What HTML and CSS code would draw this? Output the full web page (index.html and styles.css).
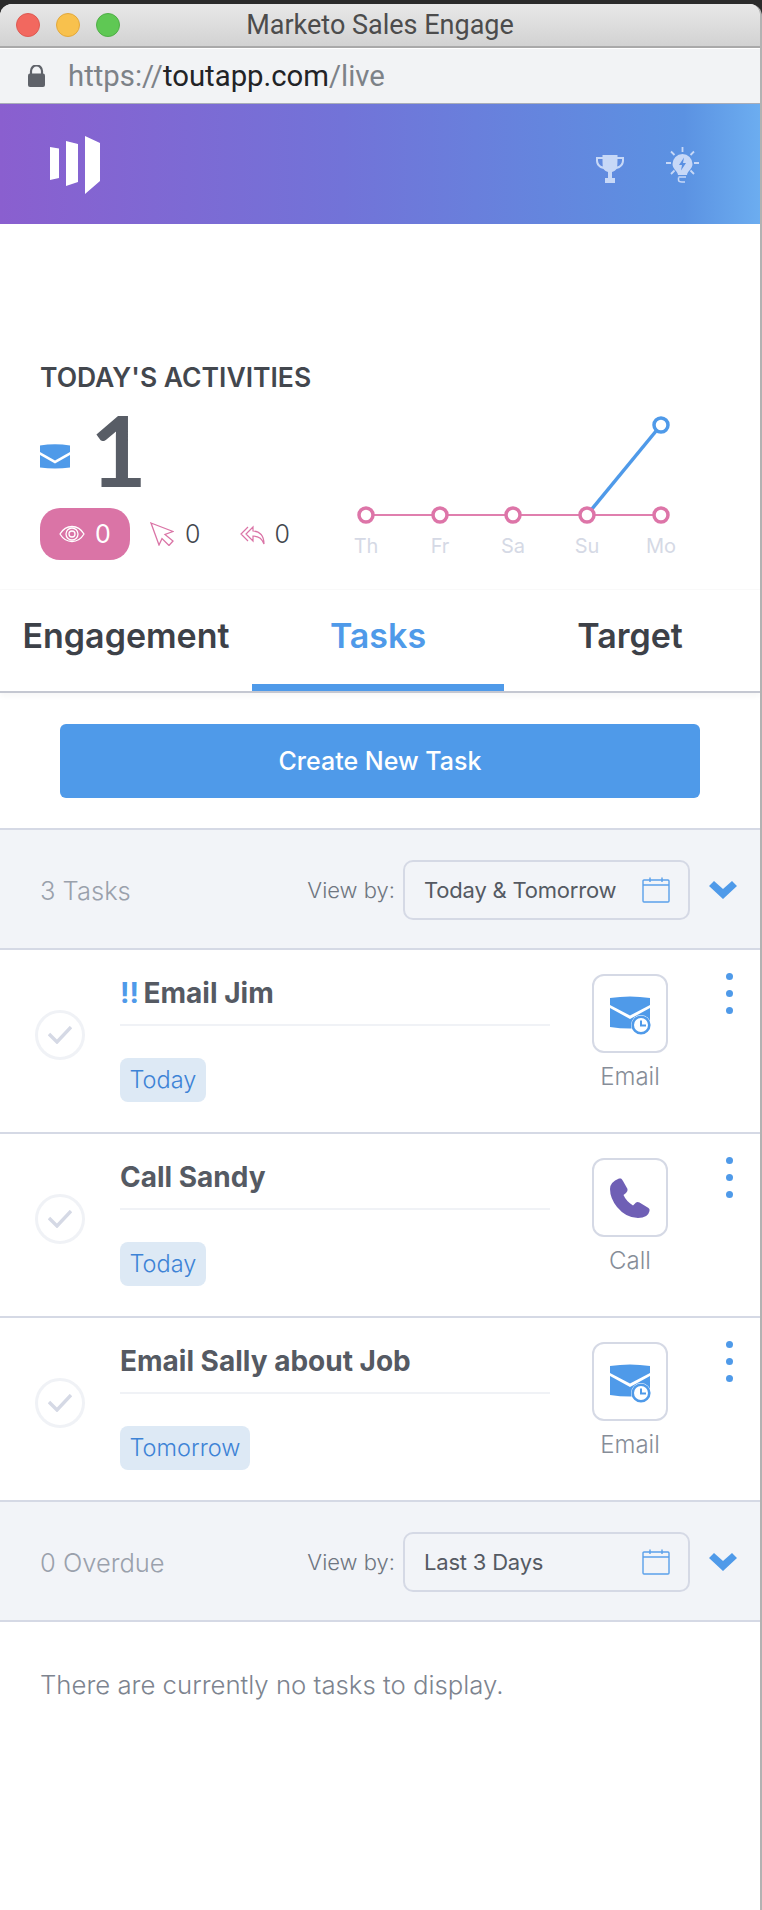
FILE: index.html
```html
<!DOCTYPE html>
<html lang="en">
<head>
    <meta charset="UTF-8">
    <meta name="viewport" content="width=device-width, initial-scale=1.0">
    <title>Marketo Sales Engage</title>
    <link rel="stylesheet" href="styles.css">
</head>
<body>
    <svg class="defs" width="0" height="0">
        <symbol id="mail-clock" viewBox="0 0 41 39">
            <path d="M0 2Q20 -1 40 2V9L20 19.500L0 9Z"/>
            <path d="M0 12L20 23L40 12V31Q20 34 0 31Z"/>
            <circle cx="31" cy="29" r="10" fill="#fff"/>
            <circle cx="31" cy="29" r="8.300" fill="#fff" stroke="#4f9ae9" stroke-width="2.600"/>
            <path d="M31 24.500V29.500H36" fill="none" stroke="#4f9ae9" stroke-width="2"/>
        </symbol>
        <symbol id="calendar" viewBox="0 0 28 26">
            <rect x="1" y="3" width="26" height="22" rx="1" fill="none" stroke="#5ba0ea" stroke-width="1.400"/>
            <path d="M1 8H27M8 0.500V5M20 0.500V5" fill="none" stroke="#5ba0ea" stroke-width="1.400"/>
        </symbol>
        <symbol id="chevron" viewBox="0 0 28 18">
            <path d="M0 5L5 0L14 8L23 0L28 5L14 18Z"/>
        </symbol>
        <symbol id="check" viewBox="0 0 24 18">
            <path d="M1 8L9 16L23 1" fill="none" stroke="#d5d9e5" stroke-width="3.400"/>
        </symbol>
    </svg>

    <div class="window">
        <div class="titlebar">
            <span class="light red"></span>
            <span class="light yellow"></span>
            <span class="light green"></span>
            <span class="window-title">Marketo Sales Engage</span>
        </div>
        <div class="addressbar">
            <svg class="lock" viewBox="0 0 17 22"><path d="M3 9V6a5.500 5.500 0 0 1 11 0v3" fill="none" stroke="#5f6269" stroke-width="2.200"/><rect y="8.500" width="17" height="13.500" rx="2" fill="#5f6269"/></svg>
            <span class="url">https://<b>toutapp.com</b>/live</span>
        </div>

        <header class="app-header">
            <svg class="logo" viewBox="0 0 50 58"><path d="M0 11L9 12.500V42L0 44ZM16 5L28 8V46L16 50ZM35 0L50 7V45L35 58Z"/></svg>
            <div class="header-icons">
                <svg class="trophy" viewBox="0 0 28 28"><path d="M6.500 0H21.500V2H28V5.500C28 10 25 13 20.500 14C19.500 15.500 17.500 16.500 16 17V23H19V28H9V23H12V17C10.500 16.500 8.500 15.500 7.500 14C3 13 0 10 0 5.500V2H6.500ZM2 4V5.500C2 8.500 4 10.800 6.800 11.600C6.600 9.500 6.500 6.500 6.500 4ZM26 4H21.500C21.500 6.500 21.400 9.500 21.200 11.600C24 10.800 26 8.500 26 5.500Z"/></svg>
                <svg class="bulb" viewBox="0 0 33 36">
                    <path d="M16.500 0V5M5 4.500L8.500 8M28 4.500L24.500 8M0 16H5M28 16H33M5 27L8.500 23.500M28 27L24.500 23.500" fill="none" stroke="#c7d8f7" stroke-width="1.800"/>
                    <path d="M16.500 7A10 10 0 0 1 26.500 17C26.500 22 21.500 24 21 28H12C11.500 24 6.500 22 6.500 17A10 10 0 0 1 16.500 7Z" fill="#c7d8f7"/>
                    <path d="M18 10.500L13 18H16L15 23.500L20 16H17Z" fill="#5a90e2"/>
                    <path d="M12.500 30H20M12.500 30.500V33C12.500 34.500 14 35 16 35H19" fill="none" stroke="#c7d8f7" stroke-width="1.500"/>
                </svg>
            </div>
        </header>

        <section class="activities">
            <h2 class="activities-title">TODAY'S ACTIVITIES</h2>
            <div class="activities-body">
                <div class="activities-left">
                    <div class="sent-count">
                        <svg class="sent-icon" viewBox="0 0 30 25"><path d="M0 1.500Q15 -.8 30 1.500V8L15 16.500L0 8Z"/><path d="M0 11L15 19.500L30 11V23.500Q15 25.500 0 23.500Z"/></svg>
                        <span class="big-number">1</span>
                    </div>
                    <div class="metrics">
                        <div class="metric metric-active">
                            <svg class="eye" viewBox="0 0 26 18"><path d="M1 9C4 4 8 1.500 13 1.500S22 4 25 9C22 14 18 16.500 13 16.500S4 14 1 9Z" fill="none" stroke="#fff" stroke-width="1.300"/><circle cx="13" cy="9" r="6" fill="none" stroke="#fff" stroke-width="1.300"/><circle cx="13" cy="9" r="3" fill="none" stroke="#fff" stroke-width="1.300"/></svg>
                            <span>0</span>
                        </div>
                        <div class="metric">
                            <svg class="cursor" viewBox="0 0 24 24"><path d="M1 1L23 9.500L15 12.500L23 19L19 23.500L12 16.500L9 23Z" fill="none" stroke="#da74a6" stroke-width="1.300"/></svg>
                            <span>0</span>
                        </div>
                        <div class="metric">
                            <svg class="reply" viewBox="0 0 25 21"><path d="M8 3L1 10L8 17M13 3L6 10L13 17V12C18 12 22 14 24 20C24 12 20 7 13 7Z" fill="none" stroke="#da74a6" stroke-width="1.200"/></svg>
                            <span>0</span>
                        </div>
                    </div>
                </div>
                <svg class="chart" viewBox="0 0 360 190">
                    <path d="M26 115H321" stroke="#e07fae" stroke-width="2" fill="none"/>
                    <path d="M247 115L321 25" stroke="#4f9ae9" stroke-width="3.500" fill="none"/>
                    <g fill="#fff" stroke="#dd75a8" stroke-width="3.500">
                        <circle cx="26" cy="115" r="7"/>
                        <circle cx="100" cy="115" r="7"/>
                        <circle cx="173" cy="115" r="7"/>
                        <circle cx="247" cy="115" r="7"/>
                        <circle cx="321" cy="115" r="7"/>
                    </g>
                    <circle cx="321" cy="25" r="7" fill="#fff" stroke="#4f9ae9" stroke-width="3.500"/>
                    <g class="chart-labels" text-anchor="middle">
                        <text x="26" y="153">Th</text>
                        <text x="100" y="153">Fr</text>
                        <text x="173" y="153">Sa</text>
                        <text x="247" y="153">Su</text>
                        <text x="321" y="153">Mo</text>
                    </g>
                </svg>
            </div>
        </section>

        <nav class="tabs">
            <div class="tab">Engagement</div>
            <div class="tab tab-active">Tasks</div>
            <div class="tab">Target</div>
        </nav>

        <div class="create-wrap">
            <button class="create-btn">Create New Task</button>
        </div>

        <div class="list-bar">
            <span class="list-count">3 Tasks</span>
            <span class="view-by">View by:</span>
            <div class="view-select">
                <span>Today &amp; Tomorrow</span>
                <svg class="calendar-icon"><use href="#calendar"/></svg>
            </div>
            <svg class="chevron-icon"><use href="#chevron"/></svg>
        </div>

        <div class="task">
            <div class="task-check"><svg class="check-icon"><use href="#check"/></svg></div>
            <div class="task-body">
                <div class="task-title"><span class="priority">!!</span> Email Jim</div>
                <span class="task-tag">Today</span>
            </div>
            <div class="task-type">
                <div class="type-tile"><svg class="mail-icon"><use href="#mail-clock"/></svg></div>
                <div class="type-label">Email</div>
            </div>
            <div class="task-menu"><i></i><i></i><i></i></div>
        </div>

        <div class="task">
            <div class="task-check"><svg class="check-icon"><use href="#check"/></svg></div>
            <div class="task-body">
                <div class="task-title">Call Sandy</div>
                <span class="task-tag">Today</span>
            </div>
            <div class="task-type">
                <div class="type-tile">
                    <svg class="phone-icon" viewBox="0 0 40 40"><path d="M9 .5L11 .5Q12 1 13 3L17.500 11Q18 13 16 15L13.500 17Q16 23 23 27.500L26 24.500Q27.500 23.500 29.500 24.500L38.500 30Q40 31 39.500 33Q38 40 28 40Q16 40 7 29Q0 20 0 11Q0 4 9 .5Z"/></svg>
                </div>
                <div class="type-label">Call</div>
            </div>
            <div class="task-menu"><i></i><i></i><i></i></div>
        </div>

        <div class="task">
            <div class="task-check"><svg class="check-icon"><use href="#check"/></svg></div>
            <div class="task-body">
                <div class="task-title">Email Sally about Job</div>
                <span class="task-tag">Tomorrow</span>
            </div>
            <div class="task-type">
                <div class="type-tile"><svg class="mail-icon"><use href="#mail-clock"/></svg></div>
                <div class="type-label">Email</div>
            </div>
            <div class="task-menu"><i></i><i></i><i></i></div>
        </div>

        <div class="list-bar list-bar-overdue">
            <span class="list-count">0 Overdue</span>
            <span class="view-by">View by:</span>
            <div class="view-select">
                <span>Last 3 Days</span>
                <svg class="calendar-icon"><use href="#calendar"/></svg>
            </div>
            <svg class="chevron-icon"><use href="#chevron"/></svg>
        </div>

        <p class="empty-note">There are currently no tasks to display.</p>
    </div>
</body>
</html>
```

FILE: styles.css
```css
* {
    box-sizing: border-box;
}
html, body {
    margin: 0;
    height: 1910px;
}
body {
    font-family: 'Inter', 'Liberation Sans', sans-serif;
    background-color: #2b2b2b;
    padding-top: 4px;
    overflow: hidden;
}
.defs {
    position: absolute;
}
.window {
    width: 762px;
    height: 1906px;
    background-color: #fff;
    border-right: 2px solid #b2b2b2;
    border-radius: 12px 12px 0 0;
    overflow: hidden;
}

/* mac window chrome */
.titlebar {
    position: relative;
    display: flex;
    align-items: center;
    height: 44px;
    padding-left: 16px;
    gap: 16px;
    background: linear-gradient(#e8e8e8, #d2d2d2);
    border-bottom: 2px solid #a9a9a9;
}
.light {
    width: 24px;
    height: 24px;
    border-radius: 50%;
}
.red { background-color: #f2685f; border: 1px solid #dd5a52; }
.yellow { background-color: #f8c14d; border: 1px solid #e2a83c; }
.green { background-color: #5fc854; border: 1px solid #50ae47; }
.window-title {
    position: absolute;
    left: 0;
    right: 0;
    text-align: center;
    font-family: 'Roboto', sans-serif;
    font-size: 27px;
    color: #4c4c4c;
}
.addressbar {
    display: flex;
    align-items: center;
    height: 56px;
    padding-left: 28px;
    background-color: #f2f3f5;
    border-bottom: 1px solid #a9adb8;
    border-top: 1px solid #fff;
}
.lock {
    width: 17px;
    height: 22px;
}
.url {
    margin-left: 23px;
    font-family: 'Roboto', sans-serif;
    font-size: 29.300px;
    color: #7d8288;
}
.url b {
    font-weight: 400;
    color: #222326;
}

/* purple header */
.app-header {
    display: flex;
    justify-content: space-between;
    align-items: flex-start;
    height: 120px;
    padding: 32px 61px 0 50px;
    background: linear-gradient(90deg, #8a5fcf 0%, #7273d8 45%, #5b92e2 90%, #6cadf0 100%);
}
.logo {
    width: 50px;
    height: 58px;
    fill: #fff;
}
.header-icons {
    display: flex;
    align-items: flex-start;
    gap: 42px;
    margin-top: 11px;
}
.trophy {
    width: 28px;
    height: 28px;
    margin-top: 8px;
    fill: #c7d8f7;
}
.bulb {
    width: 33px;
    height: 36px;
}

/* today's activities */
.activities {
    height: 366px;
    padding: 136px 0 0 40px;
    border-bottom: 1px solid #fafafa;
}
.activities-title {
    margin: 0;
    height: 30px;
    line-height: 34px;
    font-size: 26.500px;
    font-weight: 600;
    color: #43474e;
}
.activities-body {
    display: flex;
}
.activities-left {
    width: 300px;
}
.sent-count {
    display: flex;
    align-items: flex-end;
    height: 93px;
}
.sent-icon {
    width: 30px;
    height: 25px;
    margin-bottom: 14px;
    fill: #4f9ae9;
}
.big-number {
    margin: 0 0 -13px 20px;
    font-family: 'Lato', sans-serif;
    font-size: 98px;
    line-height: 93px;
    font-weight: 700;
    color: #585d66;
}
.metrics {
    display: flex;
    align-items: center;
    margin-top: 25px;
}
.metric {
    display: flex;
    align-items: center;
    font-size: 25px;
    font-weight: 300;
    color: #43474e;
}
.metric-active {
    justify-content: center;
    gap: 10px;
    width: 90px;
    height: 52px;
    background-color: #da74a6;
    border-radius: 20px;
    color: #fff;
    font-weight: 400;
}
.eye {
    width: 26px;
    height: 18px;
}
.cursor {
    width: 24px;
    height: 24px;
    margin: 0 11px 0 20px;
}
.reply {
    width: 25px;
    height: 21px;
    margin: 0 9px 0 40px;
}
.chart {
    width: 360px;
    height: 190px;
    margin-top: 10px;
}
.chart-labels {
    font-size: 20px;
    fill: #d5d9e5;
}

/* tabs */
.tabs {
    position: relative;
    display: flex;
    height: 103px;
    border-bottom: 2px solid #c4c7d1;
    box-shadow: 0 3px 6px rgba(0, 0, 0, 0.04);
}
.tab {
    width: 252px;
    height: 101px;
    line-height: 92px;
    text-align: center;
    font-size: 34px;
    font-weight: 600;
    color: #3d4148;
}
.tab-active {
    color: #4f9ae9;
    border-bottom: 7px solid #4f9ae9;
}
.create-wrap {
    padding: 31px 60px 30px;
}
.create-btn {
    display: block;
    width: 640px;
    height: 74px;
    font-family: inherit;
    font-size: 25px;
    font-weight: 500;
    color: #fff;
    background-color: #4f9ae9;
    border: none;
    border-radius: 6px;
}

/* list bars */
.list-bar {
    display: flex;
    align-items: center;
    height: 122px;
    padding: 2px 23px 0 40px;
    background-color: #f2f4f8;
    border-top: 2px solid #d5d9e5;
    border-bottom: 2px solid #d5d9e5;
}
.list-bar-overdue {
    margin-top: -2px;
}
.list-count {
    flex: 1;
    font-size: 25.500px;
    font-weight: 300;
    color: #9aa1ac;
}
.view-by {
    font-size: 22px;
    font-weight: 300;
    color: #6f7681;
}
.view-select {
    display: flex;
    justify-content: space-between;
    align-items: center;
    width: 287px;
    height: 60px;
    margin-left: 8px;
    padding: 0 18px 0 19px;
    background-color: #f2f4f8;
    border: 2px solid #d5d9e5;
    border-radius: 10px;
    font-size: 22px;
    font-weight: 400;
    letter-spacing: -0.2px;
    color: #555a63;
}
.calendar-icon {
    width: 28px;
    height: 26px;
}
.chevron-icon {
    width: 28px;
    height: 18px;
    margin-left: 19px;
    fill: #4f9ae9;
}

/* task rows */
.task {
    display: flex;
    align-items: flex-start;
    height: 184px;
    border-bottom: 2px solid #d5d9e5;
}
.task-check {
    display: flex;
    justify-content: center;
    align-items: center;
    width: 50px;
    height: 50px;
    margin: 60px 35px 0;
    border: 3px solid #f0f2f6;
    border-radius: 50%;
}
.check-icon {
    width: 24px;
    height: 18px;
}
.task-body {
    width: 430px;
    margin-top: 24px;
}
.task-title {
    height: 52px;
    line-height: 38px;
    border-bottom: 2px solid #f0f2f6;
    font-size: 28px;
    font-weight: 700;
    color: #555a63;
}
.priority {
    margin-right: -2px;
    color: #4f9ae9;
}
.task-tag {
    display: inline-block;
    height: 44px;
    line-height: 44px;
    margin-top: 32px;
    padding: 0 9.500px;
    background-color: #dde9f5;
    border-radius: 8px;
    font-size: 23.500px;
    font-weight: 300;
    color: #3d83d6;
}
.task-type {
    width: 76px;
    margin: 24px 0 0 42px;
}
.type-tile {
    display: flex;
    justify-content: center;
    align-items: center;
    width: 76px;
    height: 79px;
    border: 2px solid #d5d9e5;
    border-radius: 12px;
}
.mail-icon {
    width: 41px;
    height: 39px;
    margin-top: 4px;
    fill: #4f9ae9;
}
.phone-icon {
    width: 40px;
    height: 40px;
    fill: #6f5fb5;
}
.type-label {
    margin-top: 9px;
    text-align: center;
    font-size: 24px;
    font-weight: 300;
    color: #868d98;
}
.task-menu {
    display: flex;
    flex-direction: column;
    gap: 10px;
    margin: 23px 0 0 58px;
}
.task-menu i {
    width: 7px;
    height: 7px;
    background-color: #4f9ae9;
    border-radius: 50%;
}
.empty-note {
    margin: 47px 0 0 40px;
    font-size: 25.750px;
    font-weight: 300;
    color: #7d848f;
}
```
